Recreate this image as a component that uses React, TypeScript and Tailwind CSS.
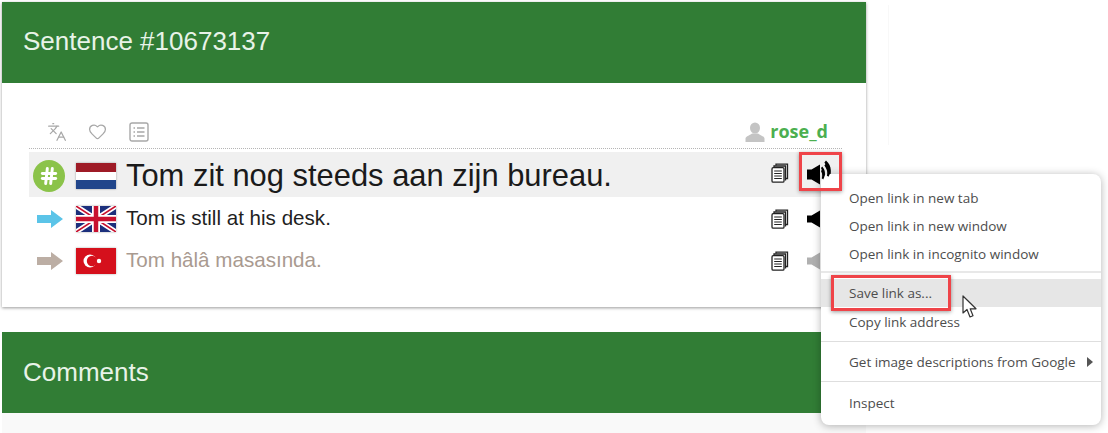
import React from "react";
import { Hash, Heart, Languages } from "lucide-react";

const font = "font-['Liberation_Sans',Arial,sans-serif]";

const Dutch = () => (
  <svg width="40" height="26" viewBox="0 0 40 26" className="shadow-[0_0_2px_rgba(0,0,0,0.35)]">
    <rect width="40" height="9" fill="#9e1b26" />
    <rect y="9" width="40" height="8" fill="#ffffff" />
    <rect y="17" width="40" height="9" fill="#21468b" />
  </svg>
);

const British = () => (
  <svg width="40" height="26" viewBox="0 0 40 26" className="shadow-[0_0_2px_rgba(0,0,0,0.35)]">
    <rect width="40" height="26" fill="#1c2f7c" />
    <path d="M0 0 40 26M40 0 0 26" stroke="#fff" strokeWidth="5" />
    <path d="M0 0 40 26M40 0 0 26" stroke="#c8102e" strokeWidth="1.6" />
    <path d="M20 0V26M0 13H40" stroke="#fff" strokeWidth="8" />
    <path d="M20 0V26M0 13H40" stroke="#c8102e" strokeWidth="4.5" />
  </svg>
);

const Turkish = () => (
  <svg width="40" height="26" viewBox="0 0 40 26" className="shadow-[0_0_2px_rgba(0,0,0,0.35)]">
    <rect width="40" height="26" fill="#d5101c" />
    <circle cx="14" cy="13" r="6.5" fill="#fff" />
    <circle cx="16" cy="13" r="5.2" fill="#d5101c" />
    <circle cx="23" cy="13" r="2.2" fill="#fff" />
  </svg>
);

const Arrow = ({ color }: { color: string }) => (
  <svg width="26" height="18" viewBox="0 0 26 18">
    <path d="M0 5H14V0L26 9 14 18V13H0Z" fill={color} />
  </svg>
);

const CopyIcon = () => (
  <svg width="18" height="20" viewBox="0 0 18 20" fill="none" stroke="#222" strokeWidth="1.3">
    <path d="M5 2.5V1.2H16.5V15.5H14.5" />
    <path d="M3 4.5V3H14.5V17.5" />
    <rect x="1" y="4.7" width="12" height="14.5" rx="1.2" fill="#fff" />
    <path d="M3.2 8H10.8M3.2 10.5H10.8M3.2 13H10.8M3.2 15.5H10.8" strokeWidth="1.2" />
  </svg>
);

const Speaker = ({ color, waves }: { color: string; waves?: boolean }) => (
  <svg width="24" height="26" viewBox="0 0 24 26">
    <path d="M0 9.5H4.5L13 4.5V21.5L4.5 16.5H0Z" fill={color} />
    {waves && (
      <g fill={color}>
        <path d="M15.2 6.5C18.6 10 18.8 15 16.2 19.5L14.8 18.2C16 14.5 15.8 11.2 14 8Z" />
        <path d="M19 0.5C24.6 5.5 25 11.5 21.4 16.8L19.8 15.6C21.4 11.5 20.6 7 17.4 2.4Z" />
      </g>
    )}
  </svg>
);

const ListIcon = () => (
  <svg width="20" height="20" viewBox="0 0 20 20" fill="none" stroke="#a8a8a8" strokeWidth="1.4">
    <rect x="1" y="1" width="18" height="18" rx="2" />
    <path d="M4.5 6H6M8 6H15.5M4.5 10H6M8 10H15.5M4.5 14H6M8 14H15.5" />
  </svg>
);

const UserIcon = () => (
  <svg width="20" height="20" viewBox="0 0 20 20" fill="#c4c4c4">
    <ellipse cx="10" cy="6" rx="5" ry="5.6" />
    <path d="M0.5 20V16.5C0.5 14 6 13 7 11.5H13C14 13 19.5 14 19.5 16.5V20Z" />
  </svg>
);

const Sentence = ({
  icon,
  flag,
  text,
  className,
  rowClass,
  copyClass,
  speaker,
}: {
  icon: React.ReactNode;
  flag: React.ReactNode;
  text: string;
  className: string;
  rowClass: string;
  copyClass?: string;
  speaker: React.ReactNode;
}) => (
  <div className={`flex items-center ${rowClass}`}>
    <div className="w-[41px] flex justify-center shrink-0">{icon}</div>
    <div className="w-[56px] shrink-0 pl-[6px]">{flag}</div>
    <div className={`flex-1 ${className}`}>{text}</div>
    <div className={`w-[20px] ml-[1px] shrink-0 flex justify-center ${copyClass ?? ""}`}>
      <CopyIcon />
    </div>
    <div className="w-[52px] shrink-0 pl-[17px] flex">{speaker}</div>
  </div>
);

const MenuItem = ({ label, active, arrow }: { label: string; active?: boolean; arrow?: boolean }) => (
  <div className={`h-[28px] flex items-center justify-between pl-[28px] pr-[8px] ${active ? "bg-[#e6e6e6]" : ""}`}>
    <span>{label}</span>
    {arrow && <span className="w-0 h-0 border-y-[5px] border-y-transparent border-l-[6px] border-l-[#555]" />}
  </div>
);

const App = () => (
  <div className={`relative flex w-[1108px] h-[433px] overflow-hidden bg-white ${font}`}>
    {/* Main column */}
    <div className="w-[864px] ml-[2px] pt-[2px] shrink-0">
      <div className="bg-white shadow-[0_1px_3px_rgba(0,0,0,0.4)]">
        <div className="h-[81px] bg-[#317d35] flex items-center pl-[21px] pb-[2px] text-[26px] text-[#e8f3e8]">
          Sentence #10673137
        </div>
        <div className="h-[224px] pl-[27px] pr-[24px] pt-[37px]">
          <div className="h-[29px] flex items-center justify-between border-b border-dotted border-[#b5b5b5] pb-[5px]">
            <div className="flex items-center pl-[18px]">
              <Languages size={20} strokeWidth={1.5} color="#a8a8a8" />
              <Heart size={19} strokeWidth={1.6} color="#a8a8a8" className="ml-[21px]" />
              <div className="ml-[22px]">
                <ListIcon />
              </div>
            </div>
            <div className="flex items-center gap-[5px] pr-[14px] text-[18px] font-bold font-['Open_Sans',sans-serif] text-[#4caf50]">
              <UserIcon />
              rose_d
            </div>
          </div>
          <Sentence
            rowClass="h-[45px] mt-[3px] pt-[3px] bg-[#f0f0f0]"
            copyClass="mb-[6px]"
            icon={
              <div className="w-[32px] h-[32px] mr-[2px] rounded-full bg-[#8bc34a] flex items-center justify-center">
                <Hash size={20} strokeWidth={3.5} color="#fff" />
              </div>
            }
            flag={<Dutch />}
            text="Tom zit nog steeds aan zijn bureau."
            className="text-[30.9px] text-[#1a1a1a]"
            speaker={<Speaker color="#000" waves />}
          />
          <Sentence
            rowClass="h-[42px] pt-[1px]"
            icon={<Arrow color="#5bc4e8" />}
            flag={<British />}
            text="Tom is still at his desk."
            className="text-[20.6px] text-[#1f1f1f]"
            speaker={<Speaker color="#000" />}
          />
          <Sentence
            rowClass="h-[41px] pt-[2px]"
            icon={<Arrow color="#bcaea4" />}
            flag={<Turkish />}
            text="Tom hâlâ masasında."
            className="text-[20.6px] text-[#a99a90]"
            speaker={<Speaker color="#b0b0b0" />}
          />
        </div>
      </div>
      <div className="mt-[25px] h-[81px] bg-[#317d35] flex items-center pl-[21px] text-[26px] text-[#e8f3e8]">
        Comments
      </div>
      <div className="h-[30px] bg-[#f9f9f9]" />
    </div>

    {/* Faint side panel edge behind the menu */}
    <div className="ml-[22px] mt-[5px] h-[140px] w-[220px] border-l border-[#f8f8f8]" />

    {/* Context menu */}
    <div className="absolute left-[821px] top-[174px] w-[280px] h-[251px] rounded-[8px] bg-white shadow-[0_1px_8px_rgba(0,0,0,0.3)] pt-[10px] font-['Open_Sans',sans-serif] text-[13.5px] text-[#4d4d4d]">
      <MenuItem label="Open link in new tab" />
      <MenuItem label="Open link in new window" />
      <MenuItem label="Open link in incognito window" />
      <div className="h-[2px] bg-[#e8e8e8] mt-[3px] mb-[6px]" />
      <MenuItem label="Save link as..." active />
      <div className="mt-[1px]">
        <MenuItem label="Copy link address" />
      </div>
      <div className="h-[1px] bg-[#dedede] mt-[5px] mb-[6px]" />
      <MenuItem label="Get image descriptions from Google" arrow />
      <div className="h-[1px] bg-[#dedede] mt-[5px] mb-[7px]" />
      <MenuItem label="Inspect" />
    </div>

    {/* Highlight on the speaker, drawn over the menu corner */}
    <div className="absolute left-[799px] top-[152px] w-[43px] h-[39px] border-[3px] border-[#ef4449] shadow-[0_1px_4px_rgba(0,0,0,0.4)]">
      <div className="ml-[5px] mt-[5px]">
        <Speaker color="#000" waves />
      </div>
    </div>

    {/* Highlight on the menu item, and the pointer */}
    <div className="absolute left-[831px] top-[275px] w-[120px] h-[36px] border-[3px] border-[#ef4449] shadow-[0_1px_4px_rgba(0,0,0,0.4)]" />
    <svg className="absolute left-[962px] top-[295px]" width="16" height="24" viewBox="0 0 16 24">
      <path d="M1 1V18L5 14.5 8 22 11 20.8 8.2 13.8H14Z" fill="#fff" stroke="#333" strokeWidth="1.2" strokeLinejoin="round" />
    </svg>
  </div>
);

export default App;
